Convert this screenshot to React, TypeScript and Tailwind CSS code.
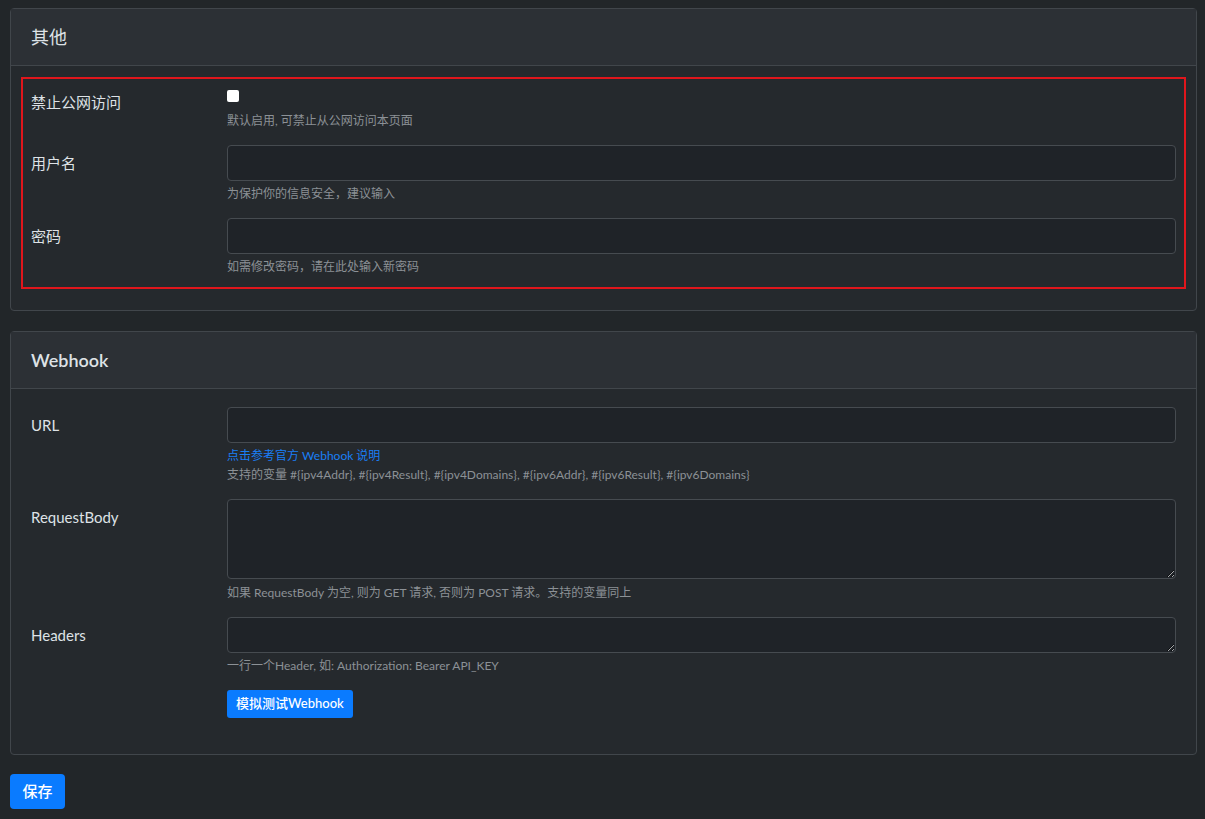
import type { ReactNode } from 'react';

const font = { fontFamily: 'Lato, "Noto Sans CJK SC", sans-serif' };

function Card({ title, bold, children }: { title: string; bold?: boolean; children: ReactNode }) {
  return (
    <div className="rounded-[4px] border border-[#41464b] bg-[#25292d]">
      <div className="flex h-[57px] items-center border-b border-[#41464b] bg-[#2c3035] px-5">
        <h3 className={`text-[18px] text-[#dee2e6] ${bold ? 'font-semibold' : 'font-normal'}`}>{title}</h3>
      </div>
      {children}
    </div>
  );
}

function Row({ label, children, last }: { label: string; children: ReactNode; last?: boolean }) {
  return (
    <div className={`grid grid-cols-[196px_1fr] ${last ? '' : 'mb-[15px]'}`}>
      <label className="pt-[7px] text-[15px] leading-[22px] text-[#dee2e6]">{label}</label>
      <div>{children}</div>
    </div>
  );
}

function Help({ children, gap = 'mt-[3px]' }: { children: ReactNode; gap?: string }) {
  return <div className={`${gap} text-[12px] leading-[19px] text-[#8c9196]`}>{children}</div>;
}

const inputCls =
  'block h-[36px] w-full rounded-[4px] border border-[#464b50] bg-[#1f2328] px-3 text-[14px] text-[#dee2e6] outline-none';

export default function App() {
  return (
    <div className="min-h-screen bg-[#222629] pl-[10px] pr-[8px] pt-[8px] pb-4" style={font}>
      <Card title="其他">
        <div className="px-[10px] pt-[11px] pb-[21px]">
          <div className="border-2 border-[#e0161c] px-2 pt-[5px] pb-[11px]">
            <Row label="禁止公网访问">
              <div className="mt-[6px] h-[12px] w-[12px] rounded-[2px] bg-white" />
              <Help gap="mt-[9px]">默认启用, 可禁止从公网访问本页面</Help>
            </Row>
            <Row label="用户名">
              <input className={inputCls} />
              <Help>为保护你的信息安全，建议输入</Help>
            </Row>
            <Row label="密码" last>
              <input type="password" className={inputCls} />
              <Help>如需修改密码，请在此处输入新密码</Help>
            </Row>
          </div>
        </div>
      </Card>

      <div className="mt-[20px]">
        <Card title="Webhook" bold>
          <div className="px-5 pt-[18px] pb-[36px]">
            <Row label="URL">
              <input className={inputCls} />
              <div className="mt-[3px] text-[12px] leading-[19px]">
                <a className="text-[#1a7ff5]">点击参考官方 Webhook 说明</a>
              </div>
              <Help gap="mt-0">
                支持的变量 #{'{'}ipv4Addr{'}'}, #{'{'}ipv4Result{'}'}, #{'{'}ipv4Domains{'}'}, #{'{'}ipv6Addr{'}'}, #{'{'}ipv6Result{'}'}, #{'{'}ipv6Domains{'}'}
              </Help>
            </Row>
            <Row label="RequestBody">
              <textarea className="block h-[80px] w-full rounded-[4px] border border-[#464b50] bg-[#1f2328] px-3 py-1.5 text-[14px] text-[#dee2e6] outline-none" />
              <Help gap="mt-[4px]">如果 RequestBody 为空, 则为 GET 请求, 否则为 POST 请求。支持的变量同上</Help>
            </Row>
            <Row label="Headers" last>
              <textarea className="block h-[36px] w-full rounded-[4px] border border-[#464b50] bg-[#1f2328] px-3 py-1.5 text-[14px] text-[#dee2e6] outline-none" />
              <Help>一行一个Header, 如: Authorization: Bearer API_KEY</Help>
              <button className="mt-[15px] h-[28px] rounded-[3px] bg-[#0a7bff] px-[9px] text-[13px] font-medium text-white">
                模拟测试Webhook
              </button>
            </Row>
          </div>
        </Card>
      </div>

      <button className="mt-[19px] h-[35px] w-[55px] rounded-[4px] bg-[#0a7bff] text-[15px] font-medium text-white">保存</button>
    </div>
  );
}
